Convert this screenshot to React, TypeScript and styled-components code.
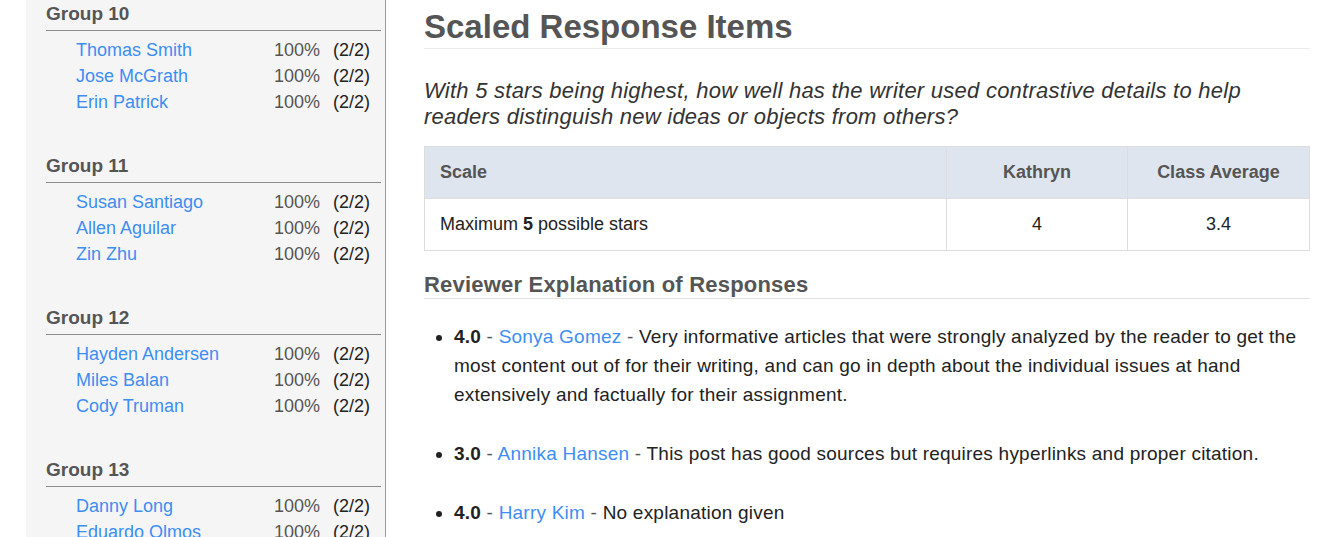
import React from "react";
import styled, { createGlobalStyle } from "styled-components";

const GlobalStyle = createGlobalStyle`
  html, body {
    margin: 0;
    padding: 0;
    height: 537px;
    overflow: hidden;
    background: #ffffff;
    font-family: "Liberation Sans", Arial, Helvetica, sans-serif;
  }
`;

const Page = styled.div`
  display: flex;
  height: 537px;
  padding-left: 26px;
`;

const Sidebar = styled.aside`
  width: 360px;
  flex: none;
  background: #f5f5f5;
  border-right: 1px solid #9a9a9a;
  padding: 3px 4px 0 20px;
  box-sizing: border-box;
  overflow: hidden;
`;

const Group = styled.section`
  margin-bottom: 40px;
`;

const GroupTitle = styled.h3`
  margin: 0 0 6px;
  font-size: 19px;
  line-height: 22px;
  font-weight: bold;
  color: #555555;
  padding-bottom: 5px;
  border-bottom: 1px solid #8c8c8c;
`;

const MemberRow = styled.div`
  display: grid;
  grid-template-columns: 198px 59px auto;
  padding-left: 30px;
  height: 26px;
  align-items: center;
  font-size: 18px;
`;

const NameLink = styled.a`
  color: #3d8ef2;
  text-decoration: none;
`;

const Percent = styled.span`
  color: #555555;
`;

const Count = styled.span`
  color: #222222;
`;

const Main = styled.main`
  flex: 1;
  padding: 0 31px 0 38px;
  overflow: hidden;
`;

const Title = styled.h1`
  margin: 8px 0 0;
  font-size: 33px;
  line-height: 38px;
  font-weight: bold;
  color: #555555;
  padding-bottom: 2px;
  border-bottom: 1px solid #ebebeb;
`;

const Question = styled.p`
  margin: 29px 0 16px;
  font-size: 22px;
  letter-spacing: 0.25px;
  line-height: 26px;
  font-style: italic;
  color: #333333;
`;

const Table = styled.table`
  width: 100%;
  border-collapse: collapse;
  font-size: 18px;
`;

const HeadCell = styled.th<{ $align?: string; $width?: string }>`
  background: #dfe5ee;
  color: #555555;
  font-weight: bold;
  font-size: 18px;
  height: 52px;
  padding: 0 15px;
  text-align: ${(p) => p.$align || "left"};
  width: ${(p) => p.$width || "auto"};
  border: 1px solid #dddddd;
  box-sizing: border-box;
`;

const BodyCell = styled.td<{ $align?: string }>`
  height: 51px;
  padding: 0 15px;
  color: #222222;
  text-align: ${(p) => p.$align || "left"};
  border: 1px solid #dddddd;
`;

const SubTitle = styled.h2`
  margin: 21px 0 0;
  font-size: 22px;
  letter-spacing: 0.2px;
  line-height: 26px;
  font-weight: bold;
  color: #555555;
  padding-bottom: 0;
  border-bottom: 1px solid #e3e3e3;
`;

const ReviewList = styled.ul`
  margin: 23px 0 0;
  padding-left: 30px;
  font-size: 19px;
  letter-spacing: 0.22px;
  line-height: 29px;
  color: #222222;
`;

const ReviewItem = styled.li`
  margin-bottom: 30px;
`;

const Score = styled.strong`
  color: #222222;
`;

const Dash = styled.span`
  color: #555555;
`;

type Member = { name: string };

const groups: { title: string; members: Member[] }[] = [
  { title: "Group 10", members: [{ name: "Thomas Smith" }, { name: "Jose McGrath" }, { name: "Erin Patrick" }] },
  { title: "Group 11", members: [{ name: "Susan Santiago" }, { name: "Allen Aguilar" }, { name: "Zin Zhu" }] },
  { title: "Group 12", members: [{ name: "Hayden Andersen" }, { name: "Miles Balan" }, { name: "Cody Truman" }] },
  { title: "Group 13", members: [{ name: "Danny Long" }, { name: "Eduardo Olmos" }, { name: "Kim Lee" }] },
];

const reviews = [
  {
    score: "4.0",
    name: "Sonya Gomez",
    text: "Very informative articles that were strongly analyzed by the reader to get the most content out of for their writing, and can go in depth about the individual issues at hand extensively and factually for their assignment.",
  },
  {
    score: "3.0",
    name: "Annika Hansen",
    text: "This post has good sources but requires hyperlinks and proper citation.",
  },
  { score: "4.0", name: "Harry Kim", text: "No explanation given" },
];

const App: React.FC = () => {
  return (
    <>
      <GlobalStyle />
      <Page>
        <Sidebar>
          {groups.map((group) => (
            <Group key={group.title}>
              <GroupTitle>{group.title}</GroupTitle>
              {group.members.map((m) => (
                <MemberRow key={m.name}>
                  <NameLink href="#">{m.name}</NameLink>
                  <Percent>100%</Percent>
                  <Count>(2/2)</Count>
                </MemberRow>
              ))}
            </Group>
          ))}
        </Sidebar>
        <Main>
          <Title>Scaled Response Items</Title>
          <Question>
            With 5 stars being highest, how well has the writer used contrastive details to help
            readers distinguish new ideas or objects from others?
          </Question>
          <Table>
            <thead>
              <tr>
                <HeadCell>Scale</HeadCell>
                <HeadCell $align="center" $width="181px">Kathryn</HeadCell>
                <HeadCell $align="center" $width="182px">Class Average</HeadCell>
              </tr>
            </thead>
            <tbody>
              <tr>
                <BodyCell>
                  Maximum <strong>5</strong> possible stars
                </BodyCell>
                <BodyCell $align="center">4</BodyCell>
                <BodyCell $align="center">3.4</BodyCell>
              </tr>
            </tbody>
          </Table>
          <SubTitle>Reviewer Explanation of Responses</SubTitle>
          <ReviewList>
            {reviews.map((r, i) => (
              <ReviewItem key={i}>
                <Score>{r.score}</Score> <Dash>-</Dash> <NameLink href="#">{r.name}</NameLink>{" "}
                <Dash>-</Dash> {r.text}
              </ReviewItem>
            ))}
          </ReviewList>
        </Main>
      </Page>
    </>
  );
};

export default App;
